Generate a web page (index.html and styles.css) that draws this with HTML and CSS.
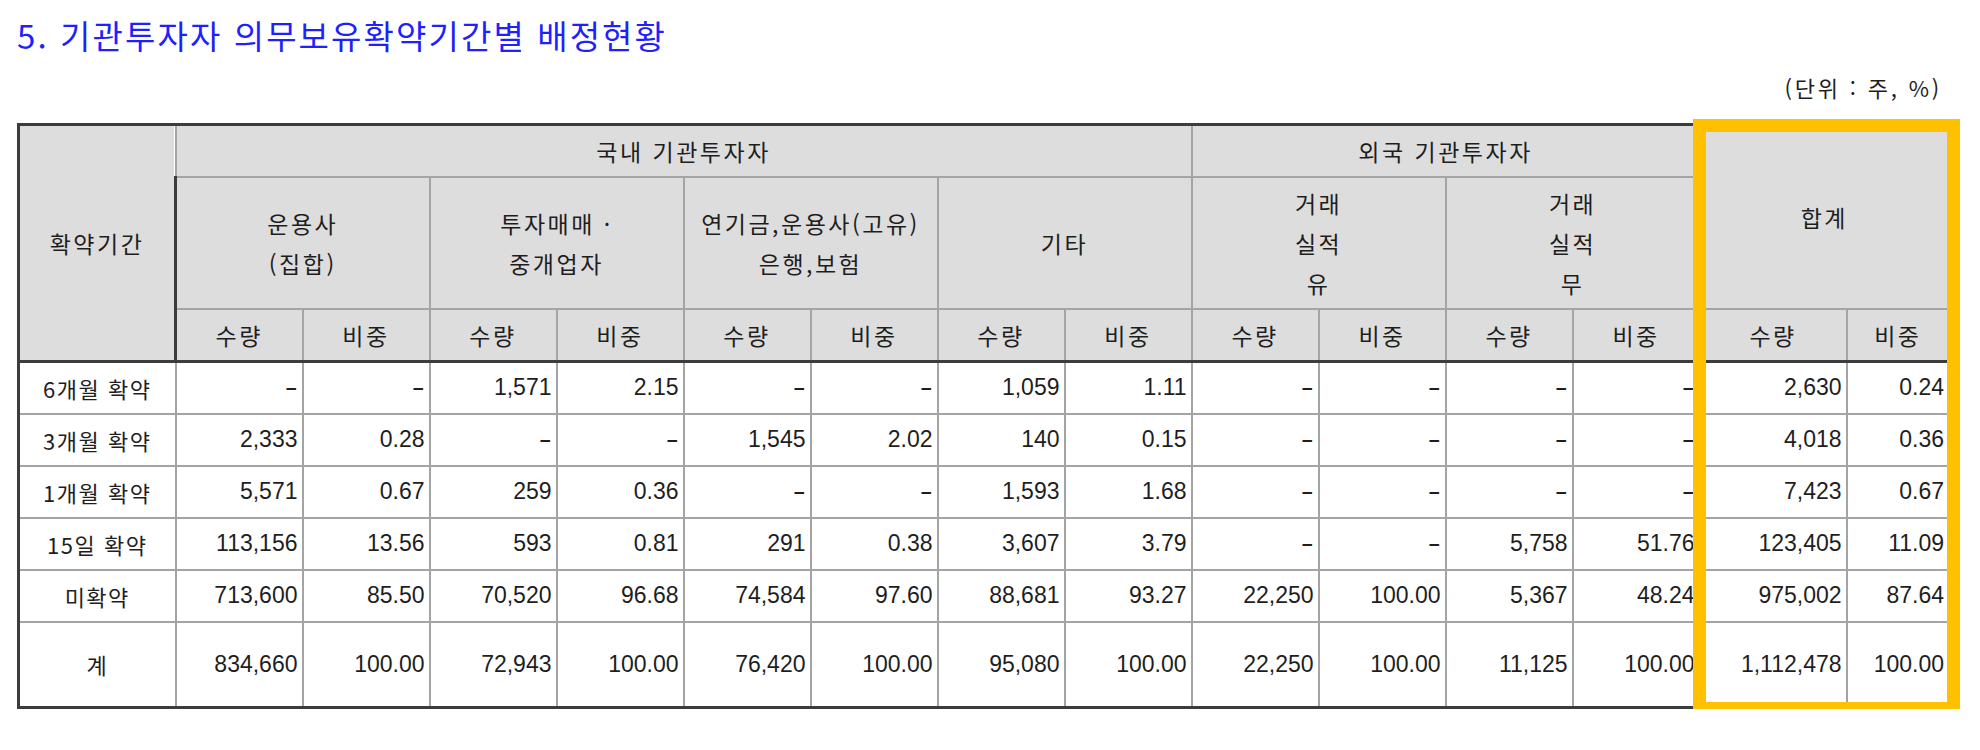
FILE: index.html
```html
<!DOCTYPE html>
<html lang="ko">
<head>
<meta charset="utf-8">
<title>기관투자자 의무보유확약기간별 배정현황</title>
<link rel="stylesheet" href="styles.css">
</head>
<body>
<h1 class="title">5. 기관투자자 의무보유확약기간별 배정현황</h1>
<div class="unit">(단위 : 주, %)</div>
<div class="table-wrap">
  <table class="alloc">
    <colgroup>
      <col class="c-label">
      <col class="c-d"><col class="c-d"><col class="c-d"><col class="c-d">
      <col class="c-d"><col class="c-d"><col class="c-d"><col class="c-d">
      <col class="c-d"><col class="c-d"><col class="c-d"><col class="c-d">
      <col class="c-sum-q"><col class="c-sum-r">
    </colgroup>
    <thead>
      <tr class="h1">
        <th rowspan="3">확약기간</th>
        <th colspan="8">국내 기관투자자</th>
        <th colspan="4">외국 기관투자자</th>
        <th colspan="2" rowspan="2">합계</th>
      </tr>
      <tr class="h2">
        <th colspan="2">운용사<br>(집합)</th>
        <th colspan="2">투자매매 ·<br>중개업자</th>
        <th colspan="2">연기금,운용사(고유)<br>은행,보험</th>
        <th colspan="2">기타</th>
        <th colspan="2">거래<br>실적<br>유</th>
        <th colspan="2">거래<br>실적<br>무</th>
      </tr>
      <tr class="h3">
        <th>수량</th><th>비중</th><th>수량</th><th>비중</th>
        <th>수량</th><th>비중</th><th>수량</th><th>비중</th>
        <th>수량</th><th>비중</th><th>수량</th><th>비중</th>
        <th>수량</th><th>비중</th>
      </tr>
    </thead>
    <tbody>
      <tr>
        <th>6개월 확약</th>
        <td><span class="dash">-</span></td><td><span class="dash">-</span></td><td>1,571</td><td>2.15</td>
        <td><span class="dash">-</span></td><td><span class="dash">-</span></td><td>1,059</td><td>1.11</td>
        <td><span class="dash">-</span></td><td><span class="dash">-</span></td><td><span class="dash">-</span></td><td><span class="dash">-</span></td>
        <td>2,630</td><td>0.24</td>
      </tr>
      <tr>
        <th>3개월 확약</th>
        <td>2,333</td><td>0.28</td><td><span class="dash">-</span></td><td><span class="dash">-</span></td>
        <td>1,545</td><td>2.02</td><td>140</td><td>0.15</td>
        <td><span class="dash">-</span></td><td><span class="dash">-</span></td><td><span class="dash">-</span></td><td><span class="dash">-</span></td>
        <td>4,018</td><td>0.36</td>
      </tr>
      <tr>
        <th>1개월 확약</th>
        <td>5,571</td><td>0.67</td><td>259</td><td>0.36</td>
        <td><span class="dash">-</span></td><td><span class="dash">-</span></td><td>1,593</td><td>1.68</td>
        <td><span class="dash">-</span></td><td><span class="dash">-</span></td><td><span class="dash">-</span></td><td><span class="dash">-</span></td>
        <td>7,423</td><td>0.67</td>
      </tr>
      <tr>
        <th>15일 확약</th>
        <td>113,156</td><td>13.56</td><td>593</td><td>0.81</td>
        <td>291</td><td>0.38</td><td>3,607</td><td>3.79</td>
        <td><span class="dash">-</span></td><td><span class="dash">-</span></td><td>5,758</td><td>51.76</td>
        <td>123,405</td><td>11.09</td>
      </tr>
      <tr>
        <th>미확약</th>
        <td>713,600</td><td>85.50</td><td>70,520</td><td>96.68</td>
        <td>74,584</td><td>97.60</td><td>88,681</td><td>93.27</td>
        <td>22,250</td><td>100.00</td><td>5,367</td><td>48.24</td>
        <td>975,002</td><td>87.64</td>
      </tr>
      <tr class="total">
        <th>계</th>
        <td>834,660</td><td>100.00</td><td>72,943</td><td>100.00</td>
        <td>76,420</td><td>100.00</td><td>95,080</td><td>100.00</td>
        <td>22,250</td><td>100.00</td><td>11,125</td><td>100.00</td>
        <td>1,112,478</td><td>100.00</td>
      </tr>
    </tbody>
  </table>
  <div class="highlight"></div>
</div>
</body>
</html>
```

FILE: styles.css
```css
html, body {
  margin: 0;
  padding: 0;
  background: #ffffff;
}

body {
  padding: 14px 0 0 17px;
  font-family: "Liberation Sans", "Noto Sans CJK KR", sans-serif;
  color: #1e1e1e;
}

.title {
  margin: 0;
  font-family: "Noto Sans CJK KR", sans-serif;
  font-weight: 400;
  font-size: 33px;
  line-height: 42px;
  letter-spacing: 2.1px;
  color: #1f1fff;
}

.unit {
  margin-top: 16px;
  width: 1925px;
  text-align: right;
  font-family: "Noto Sans CJK KR", sans-serif;
  font-size: 22px;
  line-height: 30px;
  letter-spacing: 2.8px;
  color: #1e1e1e;
}

.table-wrap {
  position: relative;
  margin-top: 21px;
  width: 1931px;
}

.alloc {
  border-collapse: collapse;
  table-layout: fixed;
  width: 1931px;
  font-size: 23px;
  border: 3px solid #3c3c3c;
}

.c-label { width: 157px; }
.c-d { width: 127px; }
.c-sum-q { width: 147px; }
.c-sum-r { width: 103px; }

.alloc th,
.alloc td {
  border: 2px solid #a4a4a4;
  padding: 0 4px;
  font-weight: 400;
  white-space: nowrap;
  overflow: hidden;
}

.alloc thead th {
  background: #dddddd;
  text-align: center;
  font-family: "Noto Sans CJK KR", sans-serif;
  font-size: 23px;
  letter-spacing: 2.5px;
}

.alloc tbody th {
  background: #ffffff;
  text-align: center;
  font-family: "Noto Sans CJK KR", sans-serif;
  font-size: 22px;
  letter-spacing: 1.5px;
}

.alloc tbody td {
  text-align: right;
  padding-right: 4px;
}

.dash {
  display: inline-block;
  transform: scaleX(1.7);
  transform-origin: right center;
}

.alloc .h1 { height: 52px; }
.alloc .h2 { height: 132px; }
.alloc .h2 th { line-height: 40px; }
.alloc .h3 { height: 53px; }
.alloc tbody tr { height: 52px; }
.alloc tbody tr.total { height: 86px; }

.alloc tr > *:first-child { border-left: 3px solid #3c3c3c; }
.alloc tr:first-child > * { border-top: 3px solid #3c3c3c; }
.alloc tbody tr:last-child > * { border-bottom: 3px solid #3c3c3c; }

.highlight {
  position: absolute;
  left: 1676px;
  top: -4px;
  width: 241px;
  height: 570px;
  border: 13px solid #ffc000;
  pointer-events: none;
}
```
